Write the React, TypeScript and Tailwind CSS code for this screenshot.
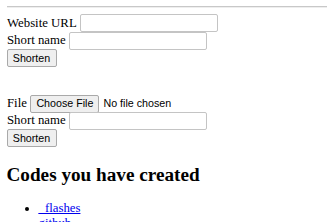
import React from "react";

const serif = "font-['Liberation_Serif','Times_New_Roman',serif]";
const sans = "font-['Liberation_Sans',Arial,sans-serif]";

function TextInput({ className = "" }: { className?: string }) {
  return (
    <span
      className={`inline-block h-[18px] w-[138px] rounded-[2px] border border-[#c4c4c4] bg-white ${className}`}
    />
  );
}

function Btn({ children, className = "" }: { children: React.ReactNode; className?: string }) {
  return (
    <span
      className={`inline-flex h-[18px] items-center justify-center whitespace-nowrap rounded-[2px] border border-[#a9a9a9] bg-[#efefef] px-[4px] text-[10.7px] leading-none text-black ${sans} ${className}`}
    >
      {children}
    </span>
  );
}

export default function App() {
  return (
    <div className={`h-[222px] w-[333px] overflow-hidden bg-white text-[12.8px] text-black ${serif}`}>
      <div className="px-[6.5px] pt-[6px]">
        <div className="h-[2px] border-t border-[#c8c8c8] border-b border-b-[#eeeeee]" />
        {/* form 1 */}
        <div className="mt-[6px] flex h-[18px] items-center whitespace-nowrap">
          <span className="pt-[1px] pl-[0.5px]">Website URL</span>
          <TextInput className="ml-[3px] w-[137px]" />
        </div>
        <div className="flex h-[17px] items-center whitespace-nowrap">
          <span className="pl-[0.5px]">Short name</span>
          <TextInput className="ml-[3px] h-[17px]" />
        </div>
        <div className="flex h-[18px] items-center">
          <Btn className="w-[50px]">Shorten</Btn>
        </div>

        {/* form 2 */}
        <div className="mt-[28px] flex h-[17px] items-center whitespace-nowrap">
          <span className="pl-[0.5px]">File</span>
          <Btn className="ml-[3.5px] h-[17px] w-[69px]">Choose File</Btn>
          <span className={`ml-[4px] text-[10.7px] ${sans}`}>No file chosen</span>
        </div>
        <div className="flex h-[17px] items-center whitespace-nowrap">
          <span className="pl-[0.5px]">Short name</span>
          <TextInput className="ml-[3px] h-[17px]" />
        </div>
        <div className="flex h-[18px] items-center">
          <Btn className="w-[50px]">Shorten</Btn>
        </div>

        <h2 className="mt-[17px] text-[19.2px] font-bold leading-[21.3px]">Codes you have created</h2>
        <ul className="mt-[16px] list-disc pl-[32px] leading-[14.7px]">
          <li>
            <a href="#" className="text-[#0000ee] underline">
              _flashes
            </a>
          </li>
          <li>
            <a href="#" className="text-[#0000ee] underline">
              github
            </a>
          </li>
        </ul>
      </div>
    </div>
  );
}
